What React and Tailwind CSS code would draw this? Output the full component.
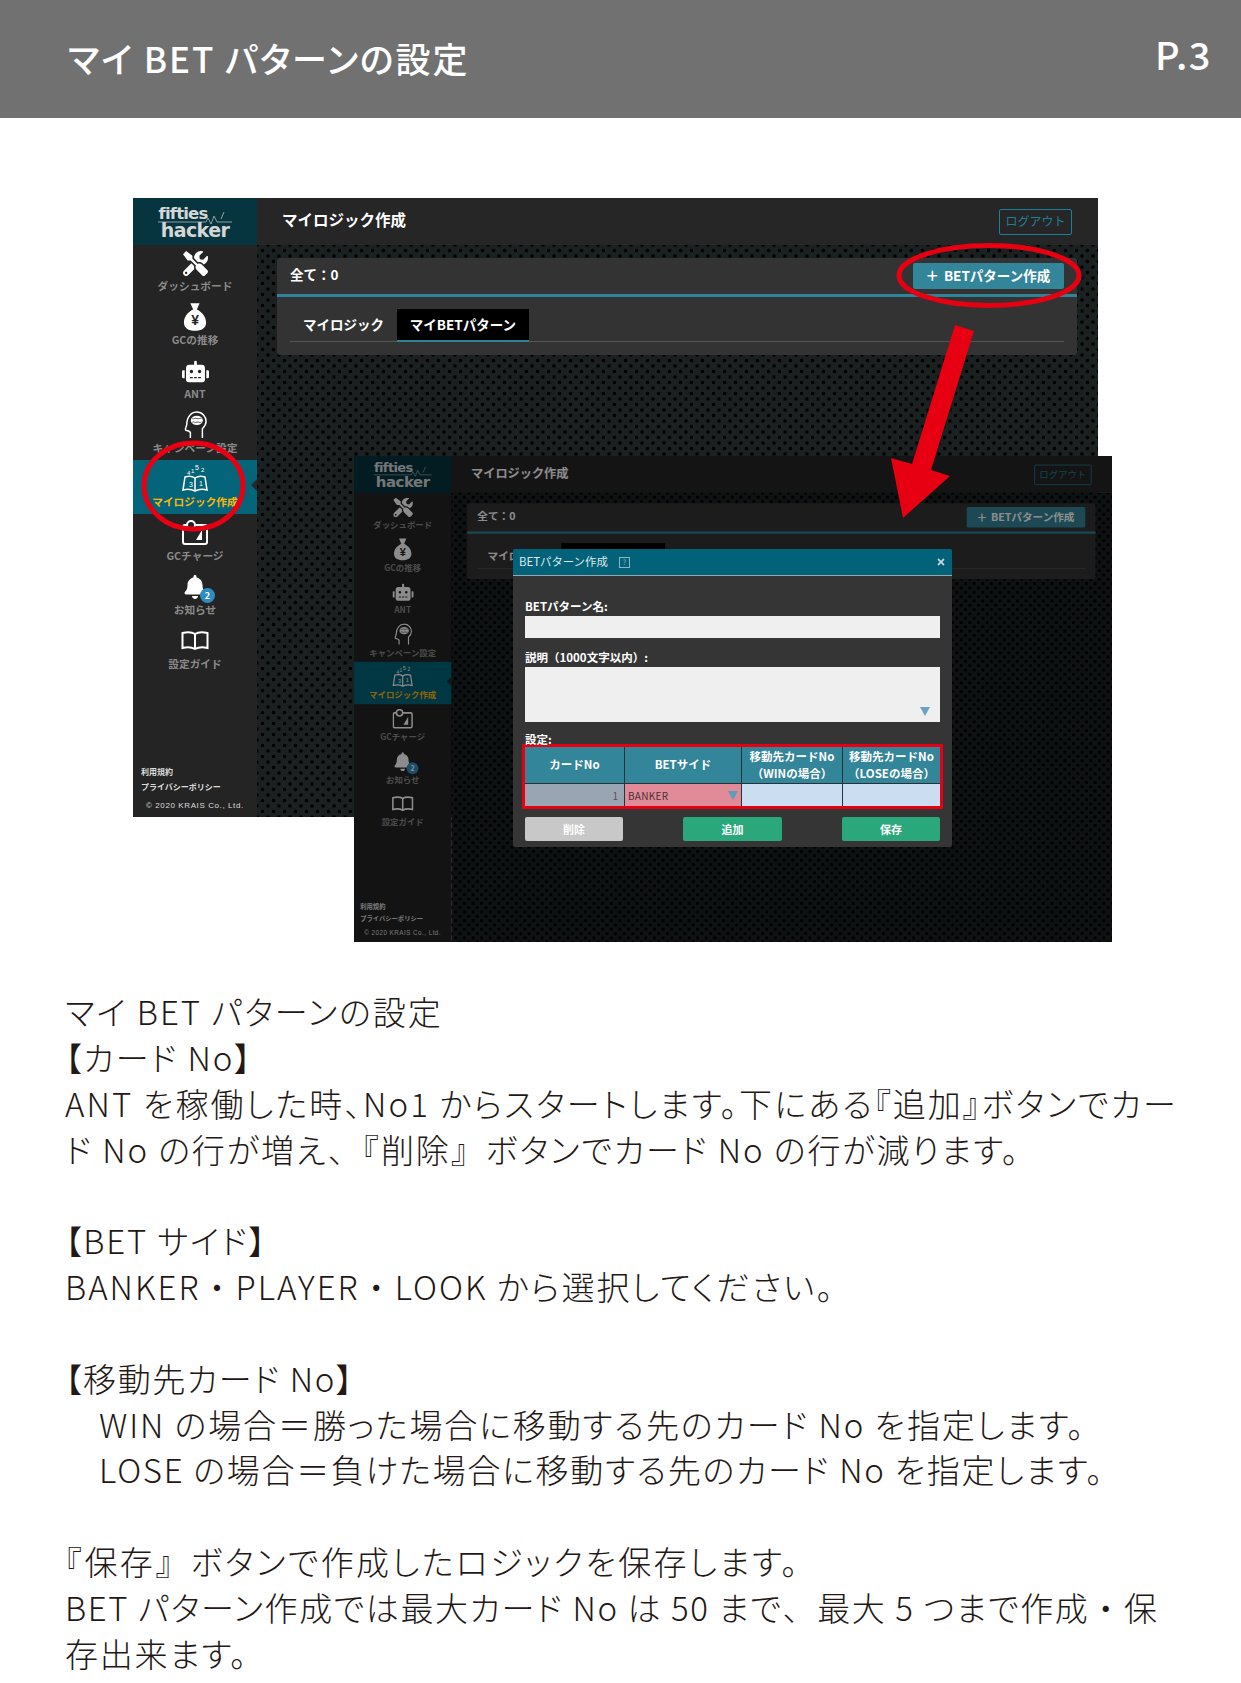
import React from 'react';
import { FaTools, FaRobot, FaBell, FaTimes } from 'react-icons/fa';

const jp = "font-['Noto_Sans_CJK_JP','Liberation_Sans',sans-serif]";

const bodyLines = [
  { t: 'マイ BET パターンの設定', c: 'tracking-[1.95px]' },
  { t: '【カード No】', c: 'tracking-[1.9px]' },
  { t: 'ANT を稼働した時、No1 からスタートします。下にある『追加』ボタンでカー', c: 'tracking-[2.13px]' },
  { t: 'ド No の行が増え、『削除』ボタンでカード No の行が減ります。', c: 'tracking-[1.9px]', wide: true },
  { t: '', c: '' },
  { t: '【BET サイド】', c: 'tracking-[1.8px]' },
  { t: 'BANKER・PLAYER・LOOK から選択してください。', c: 'tracking-[2px]', wide: true },
  { t: '', c: '' },
  { t: '【移動先カード No】', c: 'tracking-[1.6px]' },
  { t: 'WIN の場合＝勝った場合に移動する先のカード No を指定します。', c: 'pl-[34px] tracking-[1.9px]' },
  { t: 'LOSE の場合＝負けた場合に移動する先のカード No を指定します。', c: 'pl-[34px] tracking-[1.7px]' },
  { t: '', c: '' },
  { t: '『保存』ボタンで作成したロジックを保存します。', c: '-ml-[16px] tracking-[2.4px]', wide: true },
  { t: 'BET パターン作成では最大カード No は 50 まで、最大 5 つまで作成・保', c: 'tracking-[1.6px]', wide: true },
  { t: '存出来ます。', c: 'tracking-[1.8px]' },
];

// punctuation keeps its full width on the "wide" lines
const renderLine = (line) => {
  if (!line.wide) return line.t;
  return line.t.split(/([、・『』])/).map((part, i) =>
    i % 2 === 1 ? <span key={i} className="[font-feature-settings:'palt'_0]">{part}</span> : part
  );
};

// small hand drawn sidebar icons
const BagIcon = () => (
  <svg viewBox="0 0 26 32" className="h-[30px] w-[24px]">
    <path d="M8 1h10l-3 7c6 3 10 8 10 14 0 6-5 9-12 9S1 28 1 22c0-6 4-11 10-14z" fill="#fff" />
    <text x="13" y="25" textAnchor="middle" fontSize="15" fontWeight="700" fill="#242424" fontFamily="Liberation Sans">¥</text>
  </svg>
);

const HeadIcon = () => (
  <svg viewBox="0 0 26 30" className="h-[28px] w-[24px]" fill="none" stroke="#fff" strokeWidth="1.6">
    <path d="M8 29v-6c-1-1-3-2-4-2-1 0-2-1-1-3l1-3C4 6 9 1 15 1c6 0 10 5 10 10 0 4-2 6-4 8v10" />
    <ellipse cx="15" cy="10" rx="6.500" ry="5" fill="#fff" stroke="none" />
    <path d="M10 8c2 1 3-1 5 0s3-1 5 0M10 12c2-1 3 1 5 0s3 1 5 0" stroke="#242424" strokeWidth="0.8" />
  </svg>
);

const LogicIcon = () => (
  <svg viewBox="0 0 30 30" className="h-[30px] w-[30px]" fill="none" stroke="#fff" strokeWidth="1.5">
    <path d="M3 26c4-1 8-1 12 1 4-2 8-2 12-1l-2-13c-3-1-7-1-10 1-3-2-7-2-10-1z" />
    <path d="M15 14v13" />
    <text x="9" y="23" fontSize="7" fill="#fff" stroke="none" fontFamily="Liberation Sans">3</text>
    <text x="19" y="22" fontSize="7" fill="#fff" stroke="none" fontFamily="Liberation Sans">1</text>
    <text x="7" y="11" fontSize="6" fill="#fff" stroke="none" fontFamily="Liberation Sans">4</text>
    <text x="11" y="9" fontSize="6" fill="#fff" stroke="none" fontFamily="Liberation Sans">1</text>
    <text x="15" y="6" fontSize="7" fill="#fff" stroke="none" fontFamily="Liberation Sans">5</text>
    <text x="21" y="8" fontSize="6" fill="#fff" stroke="none" fontFamily="Liberation Sans">2</text>
  </svg>
);

const ChargeIcon = () => (
  <svg viewBox="0 0 26 26" className="h-[26px] w-[26px]" fill="none" stroke="#fff" strokeWidth="2">
    <rect x="1" y="5" width="24" height="19" rx="2" />
    <path d="M14 20l6-10v10z" fill="#fff" stroke="none" />
    <circle cx="9" cy="5" r="4" fill="#242424" />
  </svg>
);

const BookIcon = () => (
  <svg viewBox="0 0 28 20" className="h-[20px] w-[28px]" fill="none" stroke="#fff" strokeWidth="2">
    <path d="M14 3C11 1 6 1 1.500 2v15c4-1 9-1 12.500 1 3.500-2 8.500-2 12.500-1V2C22 1 17 1 14 3zM14 3v15" />
  </svg>
);

const navItems = [
  { label: 'ダッシュボード', icon: <FaTools size={25} color="#fff" /> },
  { label: 'GCの推移', icon: <BagIcon /> },
  { label: 'ANT', icon: <FaRobot size={27} color="#fff" /> },
  { label: 'キャンペーン設定', icon: <HeadIcon /> },
  { label: 'マイロジック作成', icon: <LogicIcon />, active: true },
  { label: 'GCチャージ', icon: <ChargeIcon /> },
  {
    label: 'お知らせ',
    icon: (
      <div className="relative">
        <FaBell size={24} color="#fff" />
        <span className="absolute -bottom-1 -right-2 flex h-[15px] w-[15px] items-center justify-center rounded-full bg-[#2f8cc0] text-[9px] font-bold text-white">2</span>
      </div>
    ),
  },
  { label: '設定ガイド', icon: <BookIcon /> },
];

const AppScreen = () => (
  <div className={`flex h-[619px] w-[965px] ${jp}`}>
    <aside className="flex w-[124px] shrink-0 flex-col bg-[#242424]">
      <div className="relative flex h-[47px] flex-col items-center justify-center bg-[#06343f] font-['DejaVu_Sans',sans-serif] font-bold leading-none text-[#d5d7d7]">
        <span className="-ml-[24px] text-[16.500px] leading-[16px] tracking-[-0.8px]">fifties</span>
        <span className="text-[19px] leading-[16px] tracking-[-0.6px]">hacker</span>
        <svg viewBox="0 0 74 14" className="absolute left-[25px] top-[12px] h-[14px] w-[74px]" fill="none" stroke="#c8cccc" strokeWidth="0.7">
          <path d="M0 12h48l2-4 3 6 3-8 3 6h15" />
          <path d="M66 2l-3 7" />
        </svg>
      </div>
      <nav className="-mt-px flex flex-col">
        {navItems.map((item) => (
          <div
            key={item.label}
            className={`relative flex h-[54px] flex-col items-center justify-end pb-[5px] ${item.active ? 'bg-[#03647a]' : ''}`}
          >
            <div className="flex h-[32px] items-center justify-center">{item.icon}</div>
            <div className={`whitespace-nowrap text-[10.700px] font-bold leading-[14px] ${item.active ? 'text-[#ffb60a]' : 'text-[#8a8a8a]'}`}>{item.label}</div>
            {item.active && (
              <span className="absolute right-0 top-[19px] h-0 w-0 border-y-[6px] border-r-[6px] border-y-transparent border-r-[#242a2c]" />
            )}
          </div>
        ))}
      </nav>
      <div className="mt-auto flex flex-col px-[8px] pb-[4px] text-[8px] font-bold leading-[15px] text-[#dddddd]">
        <span>利用規約</span>
        <span>プライバシーポリシー</span>
        <span className="mt-[4px] pl-[5px] font-['Liberation_Sans',sans-serif] font-normal tracking-[0.6px]">© 2020 KRAIS Co., Ltd.</span>
      </div>
    </aside>
    <main className="flex min-w-0 flex-1 flex-col">
      <div className="flex h-[47px] shrink-0 items-center justify-between bg-[#262626] pl-[25px] pr-[26px]">
        <span className="-mt-[4px] text-[15.500px] font-bold text-white">マイロジック作成</span>
        <span className="flex h-[26px] w-[73px] items-center justify-center rounded-[2px] border border-[#1d7f96] pb-[2px] text-[12px] text-[#1d7f96]">ログアウト</span>
      </div>
      <div className="flex-1 bg-[#1b2121] bg-[radial-gradient(circle,#000_1.6px,transparent_2.1px),radial-gradient(circle,#000_1.6px,transparent_2.1px)] bg-[length:11px_11px] bg-[position:0_0,5.5px_5.5px] pl-[20px] pr-[21px] pt-[13px]">
        <div className="h-[97px] rounded-[3px] bg-[#333333]">
          <div className="flex h-[39px] items-center justify-between border-b-[3px] border-[#2f8399] pl-[13px] pr-[13px]">
            <span className="-mt-[4px] text-[13.500px] font-bold text-white">全て：0</span>
            <span className="flex h-[26px] w-[151px] items-center justify-center gap-[6px] rounded-[2px] bg-[#338599] pb-[2px] text-[13.500px] font-bold text-white">
              <span className="text-[20px] font-normal leading-none">+</span>BETパターン作成
            </span>
          </div>
          <div className="mx-[13px] mt-[12px] flex h-[33px] border-b border-[#555555]">
            <span className="flex w-[107px] items-center justify-center pb-[1px] text-[13.500px] font-bold text-white">マイロジック</span>
            <span className="flex h-[33px] w-[132px] items-center justify-center border-b-2 border-[#2f8399] bg-black text-[13.500px] font-bold text-white">マイBETパターン</span>
          </div>
        </div>
      </div>
    </main>
  </div>
);

const Modal = () => (
  <div className={`absolute left-[159px] top-[93px] h-[298px] w-[439px] overflow-hidden rounded-[2px] bg-[#353535] ${jp}`}>
    <div className="flex h-[27px] items-center justify-between border-b border-[#9aa8ac] bg-[#02627a] pl-[6px] pr-[6px] text-[#dfe9ec]">
      <div className="flex items-center gap-[11px] text-[11.400px] leading-none">
        <span>BETパターン作成</span>
        <span className="flex h-[11px] w-[11px] items-center justify-center border border-[#8fb4bf] text-[7px] text-[#8fb4bf]">?</span>
      </div>
      <FaTimes size={10} color="#c5d5da" />
    </div>
    <div className="px-[12px] pt-[24px]">
      <div className="text-[11.500px] font-bold leading-[13px] text-white">BETパターン名:</div>
      <div className="mt-[3px] h-[22px] bg-[#efefef]" />
      <div className="mt-[13px] text-[11.500px] font-bold leading-[13px] text-white">説明（1000文字以内）:</div>
      <div className="relative mt-[3px] h-[55px] bg-[#efefef]">
        <span className="absolute bottom-[6px] right-[10px] h-0 w-0 border-x-[5px] border-t-[9px] border-x-transparent border-t-[#6ba2c0]" />
      </div>
      <div className="mt-[11px] text-[11.500px] font-bold leading-[13px] text-white">設定:</div>
      <div className="-mx-[3px] -mt-[2px] border-[3.500px] border-[#e60012]">
        <div className="grid grid-cols-[99px_116px_100px_1fr] gap-px bg-[#26343a] text-[11.500px] font-bold text-white">
          <div className="flex h-[36px] items-center justify-center bg-[#338599]">カードNo</div>
          <div className="flex h-[36px] items-center justify-center bg-[#338599]">BETサイド</div>
          <div className="flex h-[36px] flex-col items-center justify-center whitespace-nowrap bg-[#338599] leading-[17px]"><span>移動先カードNo</span><span>（WINの場合）</span></div>
          <div className="flex h-[36px] flex-col items-center justify-center whitespace-nowrap bg-[#338599] leading-[17px]"><span>移動先カードNo</span><span>（LOSEの場合）</span></div>
          <div className="flex h-[22px] items-center justify-end bg-[#9aa5b3] pr-[6px] text-[10px] font-normal text-[#555555]">1</div>
          <div className="relative flex h-[22px] items-center bg-[#e08b97] pl-[3px] text-[10px] font-normal tracking-[0.3px] text-[#4a3035]">
            BANKER
            <span className="absolute right-[3px] top-[7px] h-0 w-0 border-x-[5px] border-t-[9px] border-x-transparent border-t-[#5b9dbd]" />
          </div>
          <div className="h-[22px] bg-[#cbddf0]" />
          <div className="h-[22px] bg-[#cbddf0]" />
        </div>
      </div>
      <div className="mt-[8px] flex justify-between text-[11px] font-bold text-white">
        <span className="flex h-[24px] w-[98px] items-center justify-center rounded-[2px] bg-[#c8c8c8]">削除</span>
        <span className="flex h-[24px] w-[99px] items-center justify-center rounded-[2px] bg-[#2aa87c]">追加</span>
        <span className="flex h-[24px] w-[98px] items-center justify-center rounded-[2px] bg-[#2aa87c]">保存</span>
      </div>
    </div>
  </div>
);

export default function App() {
  return (
    <div className={`relative h-[1683px] w-[1241px] overflow-hidden bg-white ${jp}`}>
      <header className="flex h-[118px] items-start justify-between bg-[#717171] pl-[68px] pr-[29px] text-white">
        <h1 className="mt-[34px] text-[35px] font-medium leading-[48px] tracking-[1.9px] [font-feature-settings:'palt']">マイ BET パターンの設定</h1>
        <span className="mt-[29px] text-[38px] font-medium leading-[50px] tracking-[1.5px]">P.3</span>
      </header>

      <section className="relative ml-[133px] mt-[80px] h-[744px] w-[965px]">
        <AppScreen />
        <div className="absolute left-[221px] top-[258px] h-[486px] w-[758px] overflow-hidden">
          <div className="origin-top-left scale-[0.7855]">
            <AppScreen />
          </div>
          <div className="absolute inset-0 bg-black/45" />
          <Modal />
        </div>
      </section>

      <section className="ml-[65px] mt-[47px] text-[33px] font-light leading-[45.850px] text-[#231815] [font-feature-settings:'palt']">
        {bodyLines.map((line, i) => (
          <div key={i} className={`h-[45.850px] whitespace-nowrap ${line.c}`}>{renderLine(line)}</div>
        ))}
      </section>

      {/* red annotations drawn over the screenshots */}
      <svg viewBox="0 0 1241 1683" className="pointer-events-none absolute left-0 top-0 h-[1683px] w-[1241px]" fill="none" stroke="#e60012" strokeWidth="5">
        <ellipse cx="989" cy="275.500" rx="90" ry="30" />
        <ellipse cx="193.500" cy="486" rx="49.500" ry="43" />
        <polygon points="955,325 974,331 931,470 950,476 903,518 891,458 912,464" fill="#e60012" stroke="none" />
      </svg>
    </div>
  );
}
